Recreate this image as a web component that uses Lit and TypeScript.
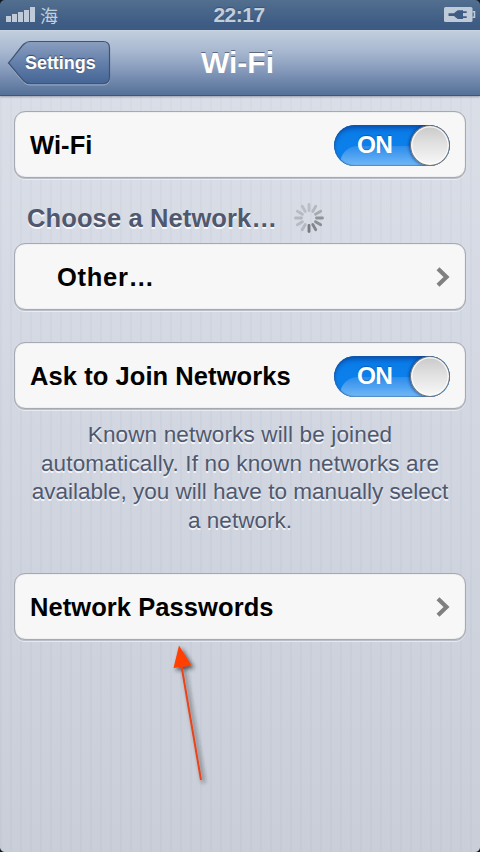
import { LitElement, html, svg, css } from "lit";
import { customElement, property } from "lit/decorators.js";

@customElement("status-bar")
class StatusBar extends LitElement {
  static styles = css`
    :host {
      display: grid;
      grid-template-columns: 1fr auto 1fr;
      align-items: center;
      height: 30px;
      box-sizing: border-box;
      padding: 0 4px 0 6px;
      background: linear-gradient(#526f90, #3f5d84 75%, #3d5b82);
      color: #c3cedb;
    }
    .left { display: flex; align-items: center; gap: 5px; }
    .carrier { font: 18px/30px "Noto Sans CJK SC", sans-serif; height: 30px; }
    .time {
      margin-right: 4px;
      font: bold 21px/30px "Liberation Sans", Arial, sans-serif;
      letter-spacing: -0.5px;
      text-shadow: 0 -1px 1px rgba(30, 50, 80, 0.4);
    }
    .battery { justify-self: end; }
    svg { display: block; }
  `;
  render() {
    return html`
      <div class="left">
        <svg width="29" height="16" viewBox="0 0 29 16" fill="#bfcbd9">
          <path d="M0 9h5v6H0zM6 7h5v8H6zM12 5h5v10h-5zM18 3h5v12h-5zM24 0h5v15h-5z" />
        </svg>
        <span class="carrier">海</span>
      </div>
      <span class="time">22:17</span>
      <svg class="battery" width="32" height="16" viewBox="0 0 32 16">
        <rect x="0" y="0" width="28.500" height="15" rx="1.500" fill="#bfcbd9" />
        <path d="M28.500 4.700h2v5.600h-2" fill="none" stroke="#bfcbd9" stroke-width="1.500" />
        <path d="M4.500 6.200H10L12 4.600L13.800 3.300H19V4.300H22.700V6H19V9.300H22.700V11H19V12H13.800L12 10.700L10 9H4.500Z" fill="#3f5d84" />
      </svg>
    `;
  }
}

@customElement("nav-bar")
class NavBar extends LitElement {
  static styles = css`
    :host {
      display: grid;
      grid-template-columns: 1fr auto 1fr;
      align-items: center;
      height: 66px;
      box-sizing: border-box;
      padding: 0 7px;
      background: linear-gradient(#cbd6e4 0, #c0cddd 2px, #a8b8d0 32%, #889cbd 60%, #5a759c 95%, #56719a 100%);
      border-bottom: 1px solid #3b5780;
      box-shadow: 0 1px 2px rgba(70, 80, 100, 0.45);
      position: relative;
      color: #fff;
      font-family: "Liberation Sans", Arial, sans-serif;
      font-weight: bold;
    }
    .back { display: grid; width: 104px; height: 46px; align-items: center; }
    .back > * { grid-area: 1 / 1; }
    .back span {
      padding-left: 18px;
      font-size: 18px;
      line-height: 44px;
      letter-spacing: -0.05px;
      text-shadow: 0 -1px 1px rgba(30, 45, 75, 0.7);
    }
    .title {
      margin-right: 5px;
      font-size: 30px;
      line-height: 64px;
      text-shadow: 0 -1.5px 0 rgba(50, 60, 80, 0.65);
    }
  `;
  render() {
    return html`
      <div class="back">
        <svg width="104" height="46" viewBox="0 0 104 46">
          <defs>
            <linearGradient id="g" x1="0" y1="0" x2="0" y2="1">
              <stop offset="0" stop-color="#8b9fbf" />
              <stop offset="0.500" stop-color="#6480aa" />
              <stop offset="1" stop-color="#456596" />
            </linearGradient>
          </defs>
          <path d="M1.500 24C7 18 12 9 17 4Q19.500 2 23 2H96Q102.500 2 102.500 8.500V38.500Q102.500 45 96 45H23Q19.500 45 17 42.500C12 38 7 30 1.500 24Z" fill="none" stroke="#b3c2d8" stroke-opacity=".6" />
          <path d="M1.500 23C7 17 12 9 17 4Q19.500 1.500 23 1.500H96Q102.500 1.500 102.500 8V37Q102.500 43.500 96 43.500H23Q19.500 43.500 17 41C12 36 7 29 1.500 23Z" fill="url(#g)" stroke="#3d5476" stroke-width="1.200" />
        </svg>
        <span>Settings</span>
      </div>
      <span class="title">Wi-Fi</span>
    `;
  }
}

@customElement("toggle-switch")
class ToggleSwitch extends LitElement {
  static styles = css`
    :host {
      display: flex;
      justify-content: space-between;
      align-items: center;
      width: 116px;
      height: 41px;
      box-sizing: border-box;
      border-radius: 21px;
      background: linear-gradient(#0a6bd8, #0a7ce8 20%, #0c80ea 50%);
      overflow: hidden;
      position: relative;
      font: bold 24.5px/40px "Liberation Sans", Arial, sans-serif;
      color: #fff;
    }
    .gloss {
      position: absolute;
      left: 6px;
      right: 0;
      top: 21px;
      bottom: 0;
      border-radius: 18px 0 0 0;
      background: linear-gradient(#2c8cec, #72b8f6);
    }
    .edge {
      position: absolute;
      inset: 0;
      border-radius: 21px;
      box-shadow: inset 0 1px 1px #1354a5, inset 0 3px 4px rgba(0, 45, 120, 0.4), inset 1px 0 1px #2a6cb8, inset 0 -1px 1px #5a92c8;
    }
    .label {
      position: relative;
      padding-left: 23px;
      letter-spacing: -0.9px;
      text-shadow: 0 -1px 1px rgba(0, 60, 140, 0.5);
    }
    .knob {
      position: relative;
      width: 40px;
      height: 41px;
      box-sizing: border-box;
      border: 1.400px solid #73757a;
      border-radius: 50%;
      background: linear-gradient(#c9c9c9, #e1e1e1 45%, #f8f8f8);
      box-shadow: inset 0 0 0 1.500px rgba(255, 255, 255, 0.75), -1px 0 3px rgba(0, 35, 90, 0.6);
    }
  `;
  render() {
    return html`
      <div class="gloss"></div>
      <div class="edge"></div>
      <span class="label">ON</span>
      <div class="knob"></div>
    `;
  }
}

@customElement("settings-cell")
class SettingsCell extends LitElement {
  @property() label = "";
  @property() accessory = "toggle";
  @property({ type: Boolean, reflect: true }) indented = false;
  static styles = css`
    :host {
      display: flex;
      align-items: center;
      justify-content: space-between;
      height: 67px;
      box-sizing: border-box;
      padding: 1px 15px 0;
      border: 1px solid #a5a9b2;
      border-radius: 11px;
      background: #f7f7f7;
      box-shadow: inset 0 0 1px #a5a9b2, 0 1px 0 #b9bec8, 0 2px 0 rgba(255, 255, 255, 0.5);
      color: #000;
      font: bold 25.5px/64px "Liberation Sans", Arial, sans-serif;
    }
    :host([indented]) .label { padding-left: 27px; letter-spacing: 0.7px; }
    .label { letter-spacing: 0.07px; white-space: nowrap; }
    svg { display: block; margin-right: -1px; }
  `;
  render() {
    return html`
      <span class="label">${this.label}</span>
      ${this.accessory === "toggle"
        ? html`<toggle-switch></toggle-switch>`
        : html`<svg width="15" height="22" viewBox="0 0 15 22">
            <path d="M2 2.800L10.500 11L2 19.200" fill="none" stroke="#808080" stroke-width="4.200" />
          </svg>`}
    `;
  }
}

@customElement("app-root")
class AppRoot extends LitElement {
  static styles = css`
    :host {
      display: block;
      position: relative;
      width: 480px;
      height: 852px;
      overflow: hidden;
      background:
        repeating-linear-gradient(90deg, rgba(110, 125, 155, 0.035) 0 2px, rgba(255, 255, 255, 0.02) 2px 10px),
        linear-gradient(#d9dee7 96px, #d0d5e0 450px, #c8cdd8 852px);
      font-family: "Liberation Sans", Arial, sans-serif;
      color: #4f586e;
    }
    main { display: flex; flex-direction: column; padding: 15px 14px 0; }
    .heading {
      display: flex;
      align-items: center;
      gap: 16px;
      height: 65px;
      padding: 15px 0 0 13px;
      box-sizing: border-box;
      font-size: 25.5px;
      font-weight: bold;
      letter-spacing: 0.12px;
      text-shadow: 0 1.500px 0 rgba(255, 255, 255, 0.8);
    }
    .ask { margin-top: 32px; }
    .note {
      margin: 12px 0 38px;
      text-align: center;
      font-size: 22.5px;
      line-height: 28.5px;
      white-space: nowrap;
      text-shadow: 0 1.500px 0 rgba(255, 255, 255, 0.75);
    }
    .wide { letter-spacing: 0.15px; }
    .pointer { position: absolute; left: 160px; top: 635px; }
    .corner { position: absolute; width: 5px; height: 5px; }
    .tl { top: 0; left: 0; background: radial-gradient(circle at 100% 100%, transparent 4.500px, #101820 5.500px); }
    .tr { top: 0; right: 0; background: radial-gradient(circle at 0 100%, transparent 4.500px, #101820 5.500px); }
    .bl { bottom: 0; left: 0; background: radial-gradient(circle at 100% 0, transparent 4.500px, #101820 5.500px); }
    .br { bottom: 0; right: 0; background: radial-gradient(circle at 0 0, transparent 4.500px, #101820 5.500px); }
  `;
  render() {
    const shades = [0.25, 0.3, 0.42, 0.62, 0.66, 0.74, 0.85, 0.3, 0.27, 0.3, 0.27, 0.25];
    return html`
      <status-bar></status-bar>
      <nav-bar></nav-bar>
      <main>
        <settings-cell label="Wi-Fi"></settings-cell>
        <div class="heading">
          <span>Choose a Network…</span>
          <svg width="32" height="32" viewBox="-16 -16 32 32">
            ${shades.map(
              (o, i) => svg`<line y1="-7.500" y2="-13.500" stroke="#65676b" stroke-width="2.800" stroke-linecap="round"
                stroke-opacity=${o} transform="rotate(${i * 30})" />`
            )}
          </svg>
        </div>
        <settings-cell label="Other…" accessory="chevron" indented></settings-cell>
        <settings-cell class="ask" label="Ask to Join Networks"></settings-cell>
        <div class="note">
          <span class="wide">Known networks will be joined</span><br />
          <span class="wide">automatically. If no known networks are</span><br />
          available, you will have to manually select<br />
          a network.
        </div>
        <settings-cell label="Network Passwords" accessory="chevron"></settings-cell>
      </main>
      <svg class="pointer" width="60" height="155" viewBox="160 635 60 155">
        <defs>
          <filter id="s" x="-50%" y="-20%" width="220%" height="140%">
            <feDropShadow dx="2.500" dy="2.500" stdDeviation="2.200" flood-color="#222" flood-opacity="0.75" />
          </filter>
        </defs>
        <g filter="url(#s)">
          <path d="M181.500 666L201 780" stroke="#e8441a" stroke-width="2" />
          <path d="M179 645.500L191.500 665.500L173.500 668Z" fill="#ff3f00" />
        </g>
      </svg>
      <div class="corner tl"></div>
      <div class="corner tr"></div>
      <div class="corner bl"></div>
      <div class="corner br"></div>
    `;
  }
}
